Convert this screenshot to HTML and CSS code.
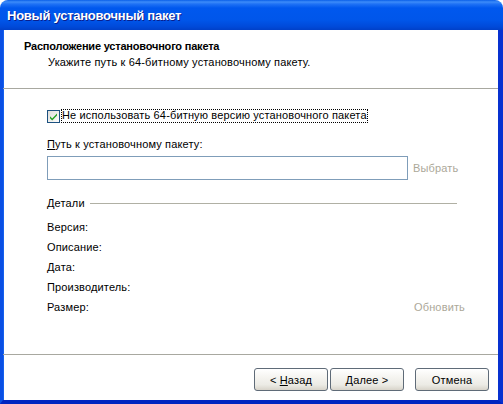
FILE: index.html
```html
<!DOCTYPE html>
<html>
<head>
<meta charset="utf-8">
<link rel="stylesheet" href="styles.css">
</head>
<body>
<div class="window">
  <div class="titlebar"><span class="title">Новый установочный пакет</span></div>
  <div class="client">
    <div class="header">
      <div class="h-title">Расположение установочного пакета</div>
      <div class="h-sub">Укажите путь к 64-битному установочному пакету.</div>
    </div>
    <div class="body">
      <div class="check-row">
        <svg class="checkbox" width="13" height="13" viewBox="0 0 13 13">
          <defs>
            <linearGradient id="cbg" x1="0" y1="0" x2="1" y2="1">
              <stop offset="0" stop-color="#dcdcd7"/>
              <stop offset="1" stop-color="#ffffff"/>
            </linearGradient>
          </defs>
          <rect x="0.5" y="0.5" width="12" height="12" fill="url(#cbg)" stroke="#1c5180"/>
          <path d="M3 6.2 L5.2 8.5 L10 3.6 L10 5.6 L5.2 10.5 L3 8.2 Z" fill="#21a121"/>
        </svg>
        <span class="check-label">Не использовать 64-битную версию установочного пакета</span>
      </div>
      <div class="path-label"><u>П</u>уть к установочному пакету:</div>
      <div class="path-row">
        <div class="input"></div>
        <span class="disabled browse">Выбрать</span>
      </div>
      <div class="details-head">
        <span>Детали</span>
        <span class="details-line"></span>
      </div>
      <div class="details">
        <div class="d-row">Версия:</div>
        <div class="d-row">Описание:</div>
        <div class="d-row">Дата:</div>
        <div class="d-row">Производитель:</div>
        <div class="d-row last"><span>Размер:</span><span class="disabled refresh">Обновить</span></div>
      </div>
    </div>
    <div class="footer">
      <button class="btn">&lt; <u>Н</u>азад</button>
      <button class="btn"><u>Д</u>алее &gt;</button>
      <button class="btn cancel">Отмена</button>
    </div>
  </div>
</div>
</body>
</html>
```
FILE: styles.css
```css
html, body {
  margin: 0;
  padding: 0;
  background: #ffffff;
}
body {
  font-family: "Liberation Sans", Arial, sans-serif;
  font-size: 11px;
  letter-spacing: 0.15px;
  color: #000000;
}
.window {
  width: 503px;
  height: 404px;
  display: flex;
  flex-direction: column;
}
.titlebar {
  height: 30px;
  box-sizing: border-box;
  border-radius: 8px 8px 0 0;
  background: linear-gradient(to bottom, #0a5fe8 0px, #3d8cf9 2px, #1f72f5 4px, #0058ee 8px, #0056ea 20px, #0049d8 27px, #0040c8 30px);
  display: flex;
  align-items: center;
  padding-left: 7px;
}
.title {
  color: #ffffff;
  font-weight: bold;
  font-size: 13px;
  text-shadow: 1px 1px 0 #0a1e8c;
  letter-spacing: -0.25px;
}
.client {
  flex: 1;
  display: flex;
  flex-direction: column;
  background: #ffffff;
  border-left: 3px solid #0a4fe4;
  border-right: 5px solid #0831d0;
  border-bottom: 4px solid #0025c0;
  box-shadow: inset 1px 0 0 #1660ee;
  min-height: 0;
}
.header {
  height: 59px;
  box-sizing: border-box;
  border-bottom: 1px solid #a8a8a0;
  padding: 10px 0 0 21px;
  line-height: 13px;
}
.h-title {
  font-weight: bold;
  letter-spacing: -0.2px;
}
.h-sub {
  margin-top: 3px;
  padding-left: 24px;
}
.body {
  flex: 1;
  padding: 20px 0 0 44px;
  line-height: 13px;
}
.check-row {
  display: flex;
  align-items: center;
  height: 14px;
}
.checkbox {
  display: block;
  flex: none;
}
.check-label {
  margin-left: 1px;
  padding: 0 1px 1px 1px;
  outline: 1px dotted #000000;
  outline-offset: -1px;
  line-height: 13px;
}
.path-label {
  margin-top: 15px;
}
.path-label u, .btn u {
  text-decoration: underline;
}
.path-row {
  display: flex;
  align-items: center;
  margin-top: 5px;
}
.input {
  width: 361px;
  height: 24px;
  box-sizing: border-box;
  border: 1px solid #7f9db9;
  background: #ffffff;
}
.disabled {
  color: #aca899;
}
.browse {
  margin-left: 5px;
}
.details-head {
  display: flex;
  align-items: center;
  margin-top: 16px;
  height: 14px;
  width: 410px;
}
.details-line {
  flex: 1;
  height: 1px;
  background: #b0b0a4;
  margin-left: 5px;
}
.details {
  margin-top: 7px;
}
.d-row {
  height: 20px;
  display: flex;
  align-items: center;
}
.d-row.last {
  justify-content: space-between;
  width: 418px;
}
.footer {
  height: 46px;
  box-sizing: border-box;
  border-top: 1px solid #a8a8a0;
  display: flex;
  justify-content: flex-end;
  align-items: flex-start;
  padding: 13px 9px 0 0;
  gap: 2px;
}
.btn {
  width: 74px;
  height: 23px;
  box-sizing: border-box;
  font-family: "Liberation Sans", Arial, sans-serif;
  font-size: 11px;
  letter-spacing: 0.15px;
  color: #000000;
  border: 1px solid #5f6b78;
  border-radius: 3px;
  background: linear-gradient(to bottom, #ffffff 0%, #f5f4f0 40%, #ecebe5 75%, #d8d4ca 100%);
  padding: 0;
  margin: 0;
}
.btn.cancel {
  margin-left: 9px;
}
```
